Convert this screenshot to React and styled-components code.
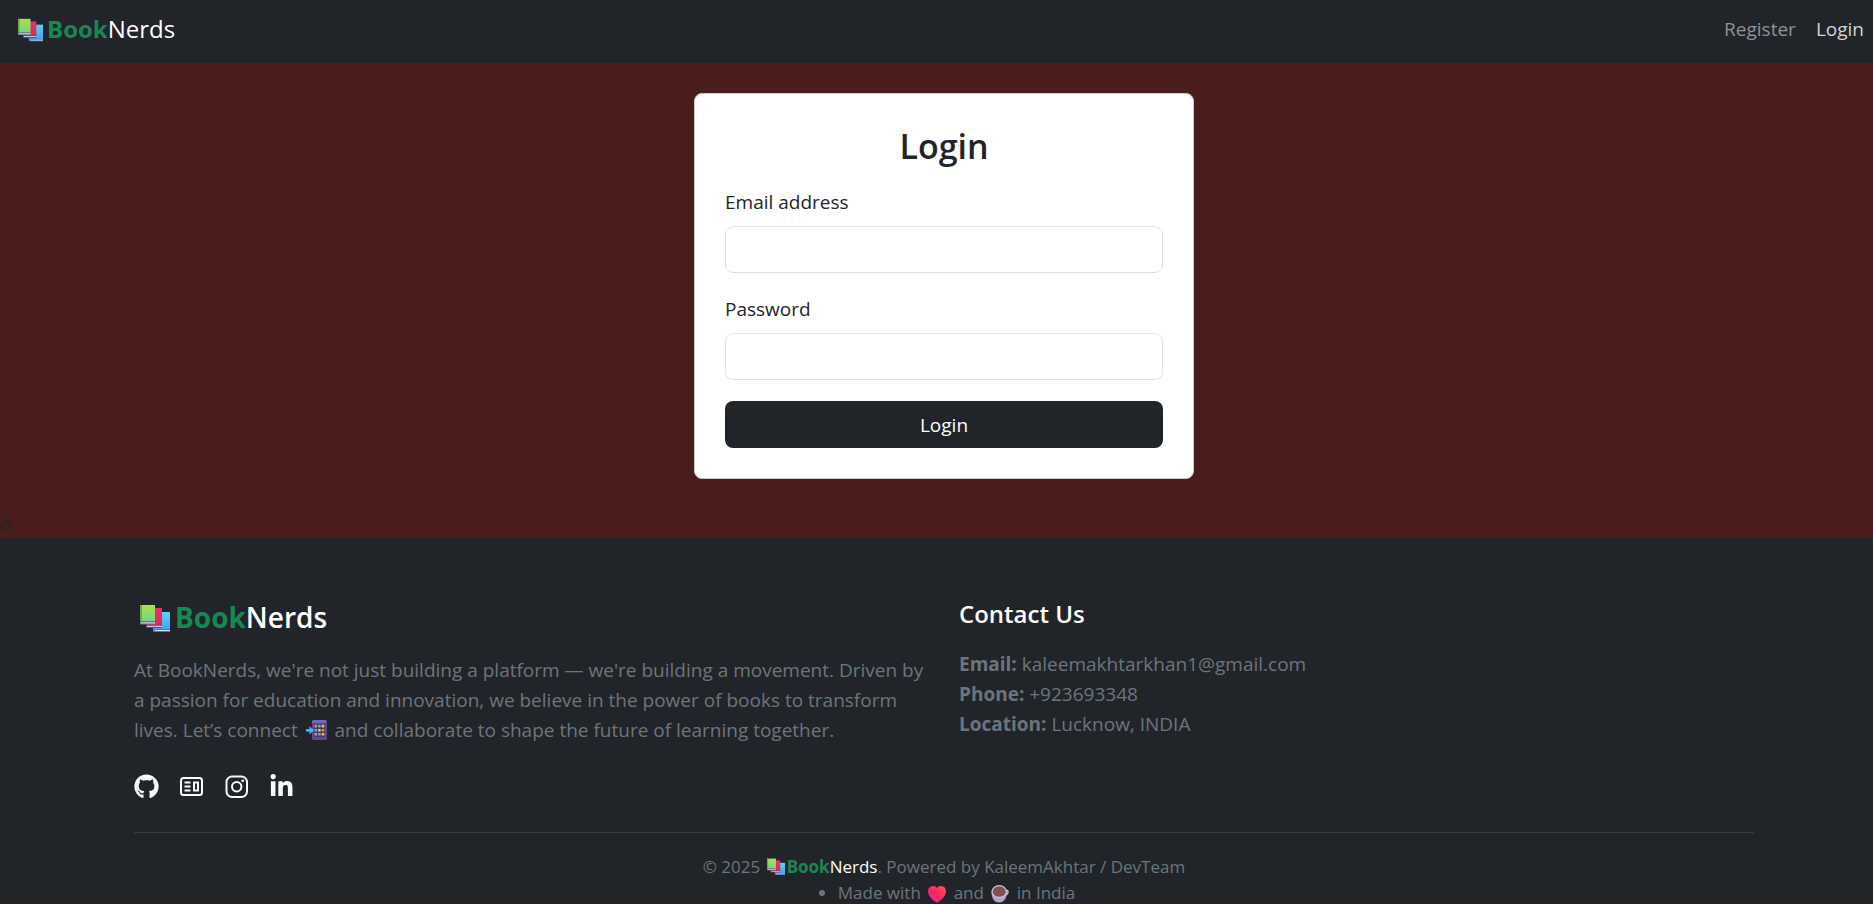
import React from "react";
import styled, { createGlobalStyle } from "styled-components";
import { FaGithub, FaLinkedinIn } from "react-icons/fa";

const GlobalStyle = createGlobalStyle`
  *, *::before, *::after { box-sizing: border-box; }
  html { overflow-x: hidden; }
  body {
    margin: 0;
    overflow-x: hidden;
    background: #4a1c1c;
    color: #212529;
    font-family: "Open Sans", "Noto Sans", sans-serif;
    font-size: 19px;
    line-height: 30px;
  }
  h1, h2, h3, p, ul { margin: 0; }
  a { color: inherit; text-decoration: none; }
`;

const Page = styled.div`
  margin: 0 -22px 0 -7px;
`;

const Navbar = styled.nav`
  display: flex;
  align-items: center;
  justify-content: space-between;
  height: 63px;
  padding: 0 31px 6px 25px;
  background: #212529;
`;

const Brand = styled.a`
  color: #fff;
  font-size: ${(p) => p.$size}px;
  font-weight: ${(p) => p.$weight || 400};
`;

const Green = styled.span`
  color: #198754;
  font-weight: 700;
`;

const NavLinks = styled.div`
  display: flex;
  gap: 20px;
`;

const NavLink = styled.a`
  color: ${(p) => (p.$active ? "#d3d3d4" : "#909294")};
`;

const Main = styled.main`
  display: flex;
  flex-direction: column;
  padding-top: 30px;
`;

const Card = styled.form`
  display: flex;
  flex-direction: column;
  align-self: center;
  width: 500px;
  max-width: 100%;
  margin-bottom: 29px;
  padding: 30px;
  border: 1px solid #d2c8c8;
  border-radius: 8px;
  background: #fff;
`;

const Title = styled.h2`
  margin-bottom: 18px;
  font-size: 34px;
  font-weight: 600;
  line-height: 45px;
  text-align: center;
`;

const Field = styled.div`
  display: flex;
  flex-direction: column;
  gap: 9px;
  margin-bottom: 21px;
`;

const Input = styled.input`
  height: 47px;
  padding: 8px 15px;
  border: 1px solid #dee2e6;
  border-radius: 8px;
  background: #fff;
  font: inherit;
`;

const SubmitButton = styled.button`
  height: 47px;
  border: 0;
  border-radius: 8px;
  background: #212529;
  color: #fff;
  font: inherit;
`;

const Footer = styled.footer`
  padding-top: 61px;
  background: #212529;
  color: #6c757d;
`;

const Container = styled.div`
  width: 100%;
  max-width: 1650px;
  margin: 0 auto;
  padding: 0 15px;
`;

const Columns = styled.div`
  display: grid;
  grid-template-columns: repeat(2, 1fr);
  gap: 30px;
`;

const BrandHeading = styled.h2`
  height: 36px;
  margin-bottom: 20px;
  padding-left: 6px;
  font-size: 28px;
  line-height: 36px;
`;

const ContactHeading = styled.h3`
  margin-bottom: 20px;
  color: #fff;
  font-size: 24px;
  font-weight: 600;
  line-height: 30px;
`;

const Socials = styled.div`
  display: flex;
  gap: 20px;
  height: 38px;
  margin: 22px 0 27px;
  align-items: center;
  color: #f8f9fa;
`;

const Social = styled.a`
  display: flex;
  font-size: 25px;
`;

const Legal = styled.div`
  display: flex;
  flex-direction: column;
  align-items: center;
  padding-top: 21px;
  border-top: 1px solid #373b3e;
  font-size: 17px;
  line-height: 26px;
`;

const Credits = styled.ul`
  height: 24px;
  padding-left: 25px;
`;

const Emoji = styled.svg`
  width: ${(p) => p.$size}px;
  height: ${(p) => p.$size}px;
  margin: 0 ${(p) => (p.$after === undefined ? p.$space : p.$after)}px 0 ${(p) => p.$space}px;
  vertical-align: ${(p) => p.$drop || -4}px;
`;

function Books({ size, after = 4, space = 0, drop }) {
  return (
    <Emoji $size={size} $space={space} $after={after} $drop={drop} viewBox="0 0 30 30" role="img" aria-label="Books">
      <defs>
        <linearGradient id="bookGreen" x2="0" y2="1"><stop stopColor="#a8e34a" /><stop offset="1" stopColor="#6fce94" /></linearGradient>
        <linearGradient id="bookBlue" x2="0" y2="1"><stop stopColor="#5bd3f7" /><stop offset="1" stopColor="#3ea0ee" /></linearGradient>
        <linearGradient id="bookRed" x2="0" y2="1"><stop stopColor="#ec2a78" /><stop offset="1" stopColor="#d92d4b" /></linearGradient>
      </defs>
      <path d="M13 8h17v19.5H13z" fill="url(#bookBlue)" />
      <path d="M14 25h16v3H14z" fill="#4b75c9" /><path d="M15 26h15v1H15z" fill="#e2dcff" />
      <path d="M6 4h16v19.500H6z" fill="url(#bookRed)" />
      <path d="M6 20.500h16v3.500H6z" fill="#a52a64" /><path d="M7 21.800h15v1H7z" fill="#eadcff" />
      <path d="M0 1h15v19H0z" fill="url(#bookGreen)" /><path d="M0 1h2v18H0z" fill="#65ad45" />
      <path d="M0 17h15v3.500H0z" fill="#627b85" /><path d="M1 18.400h14v1H1z" fill="#e6dcff" />
    </Emoji>
  );
}

function Phone() {
  const colors = ["#ff8b3d", "#45b5ff", "#ffc83d", "#45b5ff", "#ffc83d", "#ff8b3d", "#ff8b3d", "#45b5ff", "#ffc83d"];
  return (
    <Emoji $size={21} $space={3} viewBox="0 0 21 21" role="img" aria-label="Phone">
      <rect x="6" y="0" width="15" height="20" rx="1.500" fill="#63459b" />
      <path d="M7 0h13v3H6V1.500z" fill="#7964bb" />
      <path d="M8 4h11v13H8z" fill="#493764" />
      {colors.map((c, i) => (
        <rect key={i} x={8.500 + (i % 3) * 3.600} y={4.800 + Math.floor(i / 3) * 4.100} width="2.600" height="2.600" rx=".6" fill={c} />
      ))}
      <path d="M0 9h3.500V6l4.500 4.300L3.500 14.500v-3H0z" fill="#35b5fa" />
    </Emoji>
  );
}

function Heart() {
  return (
    <Emoji $size={18} $space={3} viewBox="0 0 18 18" role="img" aria-label="Love">
      <defs><linearGradient id="heart" x1="1" y1="0" x2="0" y2="1"><stop stopColor="#ff5c50" /><stop offset=".5" stopColor="#fa2860" /><stop offset="1" stopColor="#e524b8" /></linearGradient></defs>
      <path d="M9 3C7.500.8 4.800.6 2.800 1.500.5 2.500-.4 5.200.3 8 1.200 12 5 15.500 9 17.500c4-2 7.800-5.500 8.700-9.500.7-2.800-.2-5.500-2.500-6.500C13.200.6 10.500.8 9 3z" fill="url(#heart)" />
    </Emoji>
  );
}

function Coffee() {
  return (
    <Emoji $size={18} $space={3} viewBox="0 0 18 18" role="img" aria-label="Coffee">
      <path d="M13 7c2.500-2.500 4.300-2 4 0-.2 2-1.700 3.300-3.700 3.500" fill="none" stroke="#d9cfe8" strokeWidth="1.300" />
      <path d="M.5 6.500h15.500c0 6-2.500 11-8 11S.5 12.500.5 6.500z" fill="#b3a1cf" />
      <ellipse cx="8.200" cy="6.500" rx="7.700" ry="6.400" fill="#cfc3df" />
      <ellipse cx="8.200" cy="6.500" rx="6.500" ry="5.300" fill="#82504f" />
    </Emoji>
  );
}

const NewsIcon = () => (
  <svg width="25" height="25" viewBox="0 0 25 25" fill="none" stroke="currentColor" strokeWidth="2">
    <rect x="2" y="4" width="21" height="17" rx="2.500" />
    <path d="M5.500 8.500h6M5.500 12.500h6M5.500 16.500h6M15 8.500h4v8h-4z" />
  </svg>
);

const InstagramIcon = () => (
  <svg width="25" height="25" viewBox="0 0 25 25" fill="none" stroke="currentColor" strokeWidth="2">
    <rect x="2.500" y="2.500" width="20.500" height="20.500" rx="5.500" />
    <circle cx="12.700" cy="12.700" r="4.700" />
    <circle cx="18.700" cy="6.800" r="1.400" fill="currentColor" stroke="none" />
  </svg>
);

const BrandName = () => <span><Green>Book</Green>Nerds</span>;

export default function App() {
  return (
    <>
      <GlobalStyle />
      <Page>
        <Navbar>
          <Brand href="#" $size={24}><Books size={25} drop={-5} /><BrandName /></Brand>
          <NavLinks>
            <NavLink href="#register">Register</NavLink>
            <NavLink href="#login" $active>Login</NavLink>
          </NavLinks>
        </Navbar>
        <Main>
          <Card onSubmit={(e) => e.preventDefault()}>
            <Title>Login</Title>
            <Field>
              <label htmlFor="email">Email address</label>
              <Input id="email" type="email" />
            </Field>
            <Field>
              <label htmlFor="password">Password</label>
              <Input id="password" type="password" />
            </Field>
            <SubmitButton type="submit">Login</SubmitButton>
          </Card>
          <span>ss</span>
        </Main>
        <Footer>
          <Container>
            <Columns>
              <section>
                <BrandHeading>
                  <Brand href="#" $size={28} $weight={600}><Books size={30} after={5} drop={-6} /><BrandName /></Brand>
                </BrandHeading>
                <p>
                  At BookNerds, we're not just building a platform — we're building a movement. Driven by a passion
                  for education and innovation, we believe in the power of books to transform lives. Let’s
                  connect <Phone /> and collaborate to shape the future of learning together.
                </p>
                <Socials>
                  <Social href="#github" aria-label="GitHub"><FaGithub /></Social>
                  <Social href="#news" aria-label="News"><NewsIcon /></Social>
                  <Social href="#instagram" aria-label="Instagram"><InstagramIcon /></Social>
                  <Social href="#linkedin" aria-label="LinkedIn"><FaLinkedinIn /></Social>
                </Socials>
              </section>
              <section>
                <ContactHeading>Contact Us</ContactHeading>
                <p><strong>Email:</strong> kaleemakhtarkhan1@gmail.com</p>
                <p><strong>Phone:</strong> +923693348</p>
                <p><strong>Location:</strong> Lucknow, INDIA</p>
              </section>
            </Columns>
            <Legal>
              <p>© 2025 <Brand href="#" $size={17}><Books size={18} space={2} after={2} drop={-3} /><BrandName /></Brand>. Powered by KaleemAkhtar / DevTeam</p>
              <Credits><li>Made with <Heart /> and <Coffee /> in India</li></Credits>
            </Legal>
          </Container>
        </Footer>
      </Page>
    </>
  );
}
